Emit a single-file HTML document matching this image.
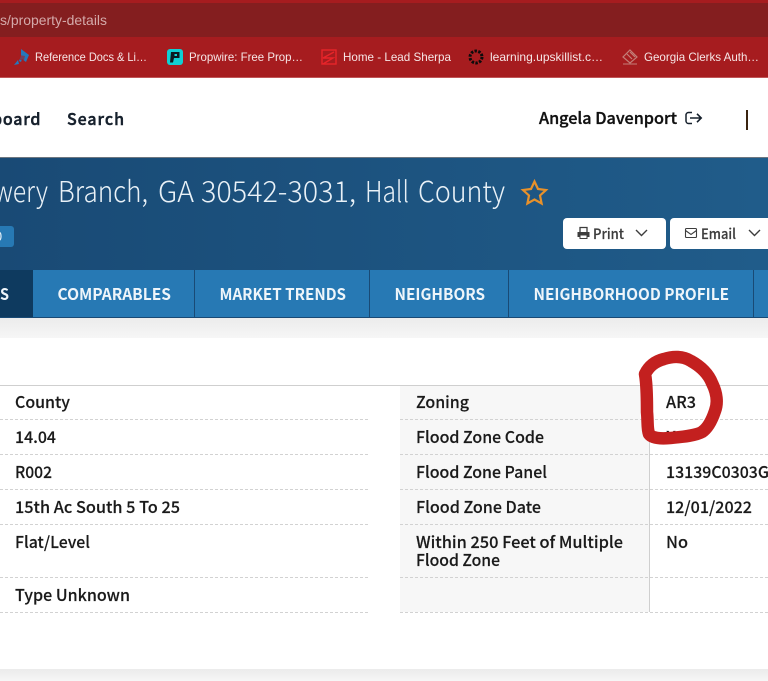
<!DOCTYPE html>
<html lang="en">
<head>
<meta charset="utf-8">
<title>Property Details</title>
<style>
html,body{margin:0;padding:0;width:768px;height:681px;overflow:hidden;background:#fff}
svg{display:block}
.b{font-family:"Liberation Sans",sans-serif;font-size:12px;fill:#f6e6e6}
.t{font-family:"Noto Sans CJK JP","Liberation Sans",sans-serif;font-size:16px;font-weight:500;fill:#1a1a1a;stroke:#1a1a1a;stroke-width:.15px}
.n{font-family:"Noto Sans CJK JP","Liberation Sans",sans-serif;font-size:16px;font-weight:500;fill:#16202c;stroke:#16202c;stroke-width:.45px}
.tab{font-family:"Noto Sans CJK JP","Liberation Sans",sans-serif;font-size:16px;font-weight:700;fill:#eef5fa}
.btn{font-family:"Noto Sans CJK JP","Liberation Sans",sans-serif;font-size:14px;font-weight:500;fill:#3d3d3d;stroke:#3d3d3d;stroke-width:.2px}
.h{font-family:"Noto Sans CJK JP","Liberation Sans",sans-serif;font-size:29px;font-weight:300;fill:#e9f1f7}
</style>
</head>
<body>
<svg width="768" height="681" viewBox="0 0 768 681" xmlns="http://www.w3.org/2000/svg">
<defs>
<linearGradient id="hd" x1="0" x2="1" y1="0" y2="0"><stop offset="0" stop-color="#194a75"/><stop offset="1" stop-color="#205c8a"/></linearGradient>
<linearGradient id="sh" x1="0" x2="0" y1="0" y2="1"><stop offset="0" stop-color="#ececec"/><stop offset="1" stop-color="#f6f6f6"/></linearGradient>
<linearGradient id="sb" x1="0" x2="0" y1="0" y2="1"><stop offset="0" stop-color="#ebebeb"/><stop offset="1" stop-color="#f6f6f6"/></linearGradient>
</defs>

<!-- browser chrome -->
<rect width="768" height="78" fill="#a61c1f"/>
<rect y="3" width="768" height="34" fill="#841e1f"/>
<rect y="77" width="768" height="1" fill="#c05557"/>
<text x="0" y="25" textLength="107" lengthAdjust="spacingAndGlyphs" font-family="Liberation Sans,sans-serif" font-size="14" fill="#d4aaaa">s/property-details</text>

<!-- bookmark 1 -->
<path d="M21 49l8 6-3 7-4-3-1 3-2-1 2-5zM18 60l-4 5 5-1z" fill="#2478bd"/>
<path d="M19 55l6 1-1 4-4 0z" fill="#a61c1f" opacity=".6"/>
<text class="b" x="35" y="61" textLength="112" lengthAdjust="spacingAndGlyphs">Reference Docs &amp; Li…</text>
<!-- bookmark 2 -->
<rect x="167" y="49" width="16" height="16" rx="3" fill="#0fd0d3"/>
<path d="M171 52h8.500v6h-5.500l-1 4.500h-3z" fill="#0c1a20"/><rect x="174.500" y="54" width="2.500" height="2" fill="#0fd0d3"/>
<text class="b" x="189" y="61" textLength="114" lengthAdjust="spacingAndGlyphs">Propwire: Free Prop…</text>
<!-- bookmark 3 -->
<rect x="322" y="50" width="14" height="14" fill="none" stroke="#e8252a" stroke-width="1.400"/>
<path d="M334 52l-11 6h10l-10 6" fill="none" stroke="#e8252a" stroke-width="1.400"/>
<text class="b" x="343" y="61" textLength="108" lengthAdjust="spacingAndGlyphs">Home - Lead Sherpa</text>
<!-- bookmark 4 -->
<circle cx="476" cy="57" r="6" fill="none" stroke="#0c0c0c" stroke-width="3" stroke-dasharray="2.400 1.400"/>
<text class="b" x="490" y="61" textLength="113" lengthAdjust="spacingAndGlyphs">learning.upskillist.c…</text>
<!-- bookmark 5 -->
<path d="M630 50l7 7-7 6-7-6zM627 54l5 5M630 52l5 5" fill="none" stroke="#c47e78" stroke-width="1.200"/>
<path d="M623 64h14" stroke="#c47e78" stroke-width="1"/>
<text class="b" x="644" y="61" textLength="115" lengthAdjust="spacingAndGlyphs">Georgia Clerks Auth…</text>

<!-- navbar -->
<rect y="78" width="768" height="79" fill="#fff"/>
<text class="n" x="-8" y="125" letter-spacing="0.8">board</text>
<text class="n" x="67" y="125" textLength="57" lengthAdjust="spacing">Search</text>
<text class="n" x="539" y="124" textLength="138" lengthAdjust="spacingAndGlyphs" style="fill:#111;stroke:#111;stroke-width:.35px">Angela Davenport</text>
<path d="M692 112.500h-3.500a2.500 2.500 0 0 0-2.500 2.500v6a2.500 2.500 0 0 0 2.500 2.500h3.500" fill="none" stroke="#16202c" stroke-width="1.500"/>
<path d="M690 118h11M697 113.800l4.200 4.200-4.200 4.200" fill="none" stroke="#16202c" stroke-width="1.600"/>
<rect x="746" y="110" width="2" height="20" fill="#3a2410"/>

<!-- header -->
<rect y="157" width="768" height="1" fill="#6e7780"/>
<rect y="158" width="768" height="112" fill="url(#hd)"/>
<text class="h" x="-6" y="202" textLength="54" lengthAdjust="spacingAndGlyphs">wery</text>
<text class="h" x="58" y="202" textLength="90" lengthAdjust="spacingAndGlyphs">Branch,</text>
<text class="h" x="158" y="202" textLength="36" lengthAdjust="spacingAndGlyphs">GA</text>
<text class="h" x="201" y="202" textLength="155" lengthAdjust="spacingAndGlyphs">30542-3031,</text>
<text class="h" x="365" y="202" textLength="44" lengthAdjust="spacingAndGlyphs">Hall</text>
<text class="h" x="418" y="202" textLength="87" lengthAdjust="spacingAndGlyphs">County</text>
<path d="M534.500 181.500l3.500 7.500 8 1-6 5.500 1.600 8-7.100-4-7.100 4 1.600-8-6-5.500 8-1z" fill="none" stroke="#e8912a" stroke-width="2.200"/>
<rect x="-8" y="226" width="22" height="21" rx="3" fill="#2779b4"/>
<text x="-5" y="241" font-family="Noto Sans CJK JP,sans-serif" font-size="13" fill="#e8f1f8">0</text>

<!-- buttons -->
<rect x="563" y="218" width="103" height="31" rx="4" fill="#fff"/>
<rect x="670" y="218" width="110" height="31" rx="4" fill="#fff"/>
<path d="M580 232.500v-5h7l0 5" fill="none" stroke="#3d3d3d" stroke-width="1.300"/>
<path d="M577.500 232h12v5h-12z" fill="#3d3d3d"/>
<rect x="580" y="235" width="7" height="3.500" fill="#fff" stroke="#3d3d3d" stroke-width="1"/>
<text class="btn" x="593" y="239" textLength="31" lengthAdjust="spacingAndGlyphs">Print</text>
<path d="M636 230l5.500 5.500 5.500-5.500" fill="none" stroke="#3d3d3d" stroke-width="1.400"/>
<rect x="685.500" y="228.500" width="11" height="9" rx="1" fill="none" stroke="#3d3d3d" stroke-width="1.100"/>
<path d="M685.500 230.500l5.500 4 5.500-4" fill="none" stroke="#3d3d3d" stroke-width="1.100"/>
<text class="btn" x="701" y="239" textLength="35" lengthAdjust="spacingAndGlyphs">Email</text>
<path d="M749 230l5.500 5.500 5.500-5.500" fill="none" stroke="#3d3d3d" stroke-width="1.400"/>

<!-- tabs -->
<rect y="270" width="768" height="47" fill="#2779b4"/>
<rect y="270" width="33" height="47" fill="#0e3a5f"/>
<rect y="317" width="768" height="1" fill="#194a75"/>
<rect x="194" y="270" width="1" height="47" fill="#194a75"/>
<rect x="369" y="270" width="1" height="47" fill="#194a75"/>
<rect x="508" y="270" width="1" height="47" fill="#194a75"/>
<rect x="753" y="270" width="1" height="47" fill="#194a75"/>
<text class="tab" x="0" y="300" textLength="9" lengthAdjust="spacingAndGlyphs">S</text>
<text class="tab" x="57.500" y="300" textLength="113.500" lengthAdjust="spacingAndGlyphs">COMPARABLES</text>
<text class="tab" x="219.500" y="300" textLength="126.500" lengthAdjust="spacingAndGlyphs">MARKET TRENDS</text>
<text class="tab" x="394.500" y="300" textLength="90.500" lengthAdjust="spacingAndGlyphs">NEIGHBORS</text>
<text class="tab" x="533.500" y="300" textLength="195.500" lengthAdjust="spacingAndGlyphs">NEIGHBORHOOD PROFILE</text>

<!-- page bg -->
<rect y="318" width="768" height="20" fill="url(#sh)"/>
<rect y="338" width="768" height="331" fill="#fff"/>
<rect y="669" width="768" height="12" fill="url(#sb)"/>

<!-- table -->
<rect x="400" y="386" width="249" height="226" fill="#f7f7f7"/>
<rect y="385" width="768" height="1" fill="#cfcfcf"/>
<rect x="649" y="386" width="1" height="226" fill="#cfcfcf"/>
<g stroke="#d2d2d2" stroke-width="1" stroke-dasharray="3 2" fill="none">
<path d="M0 419.500h368M400 419.500h368"/>
<path d="M0 454.500h368M400 454.500h368"/>
<path d="M0 489.500h368M400 489.500h368"/>
<path d="M0 524.500h368M400 524.500h368"/>
<path d="M0 577.500h368M400 577.500h368"/>
<path d="M0 612.500h368M400 612.500h368"/>
</g>

<text class="t" x="15" y="408" textLength="55" lengthAdjust="spacingAndGlyphs">County</text>
<text class="t" x="15" y="443" textLength="41" lengthAdjust="spacingAndGlyphs">14.04</text>
<text class="t" x="15" y="478" textLength="37" lengthAdjust="spacingAndGlyphs">R002</text>
<text class="t" x="15" y="513" textLength="165" lengthAdjust="spacingAndGlyphs">15th Ac South 5 To 25</text>
<text class="t" x="15" y="548" textLength="75" lengthAdjust="spacingAndGlyphs">Flat/Level</text>
<text class="t" x="15" y="601" textLength="115" lengthAdjust="spacingAndGlyphs">Type Unknown</text>

<text class="t" x="416" y="408" textLength="53" lengthAdjust="spacingAndGlyphs">Zoning</text>
<text class="t" x="416" y="443" textLength="128" lengthAdjust="spacingAndGlyphs">Flood Zone Code</text>
<text class="t" x="416" y="478" textLength="131" lengthAdjust="spacingAndGlyphs">Flood Zone Panel</text>
<text class="t" x="416" y="513" textLength="125" lengthAdjust="spacingAndGlyphs">Flood Zone Date</text>
<text class="t" x="416" y="548" textLength="207" lengthAdjust="spacingAndGlyphs">Within 250 Feet of Multiple</text>
<text class="t" x="416" y="566" textLength="84" lengthAdjust="spacingAndGlyphs">Flood Zone</text>

<text class="t" x="666" y="408" textLength="30" lengthAdjust="spacingAndGlyphs">AR3</text>
<text class="t" x="666" y="443" textLength="10" lengthAdjust="spacingAndGlyphs">X</text>
<text class="t" x="666" y="478" textLength="103" lengthAdjust="spacingAndGlyphs">13139C0303G</text>
<text class="t" x="666" y="513" textLength="86" lengthAdjust="spacingAndGlyphs">12/01/2022</text>
<text class="t" x="666" y="548" textLength="22" lengthAdjust="spacingAndGlyphs">No</text>

<!-- red annotation -->
<path d="M645 374C649 366 656 361 664 359C673 356 683 356 691 361C700 366 708 373 712 383C717 393 718 403 715 411C712 420 708 428 702 432C695 436 680 437 670 438C660 439 652 438 649 434C647 428 648 422 647 412C647 400 647 385 645 374Z" fill="none" stroke="#c3201f" stroke-width="12.500" stroke-linejoin="round"/>
</svg>
</body>
</html>
